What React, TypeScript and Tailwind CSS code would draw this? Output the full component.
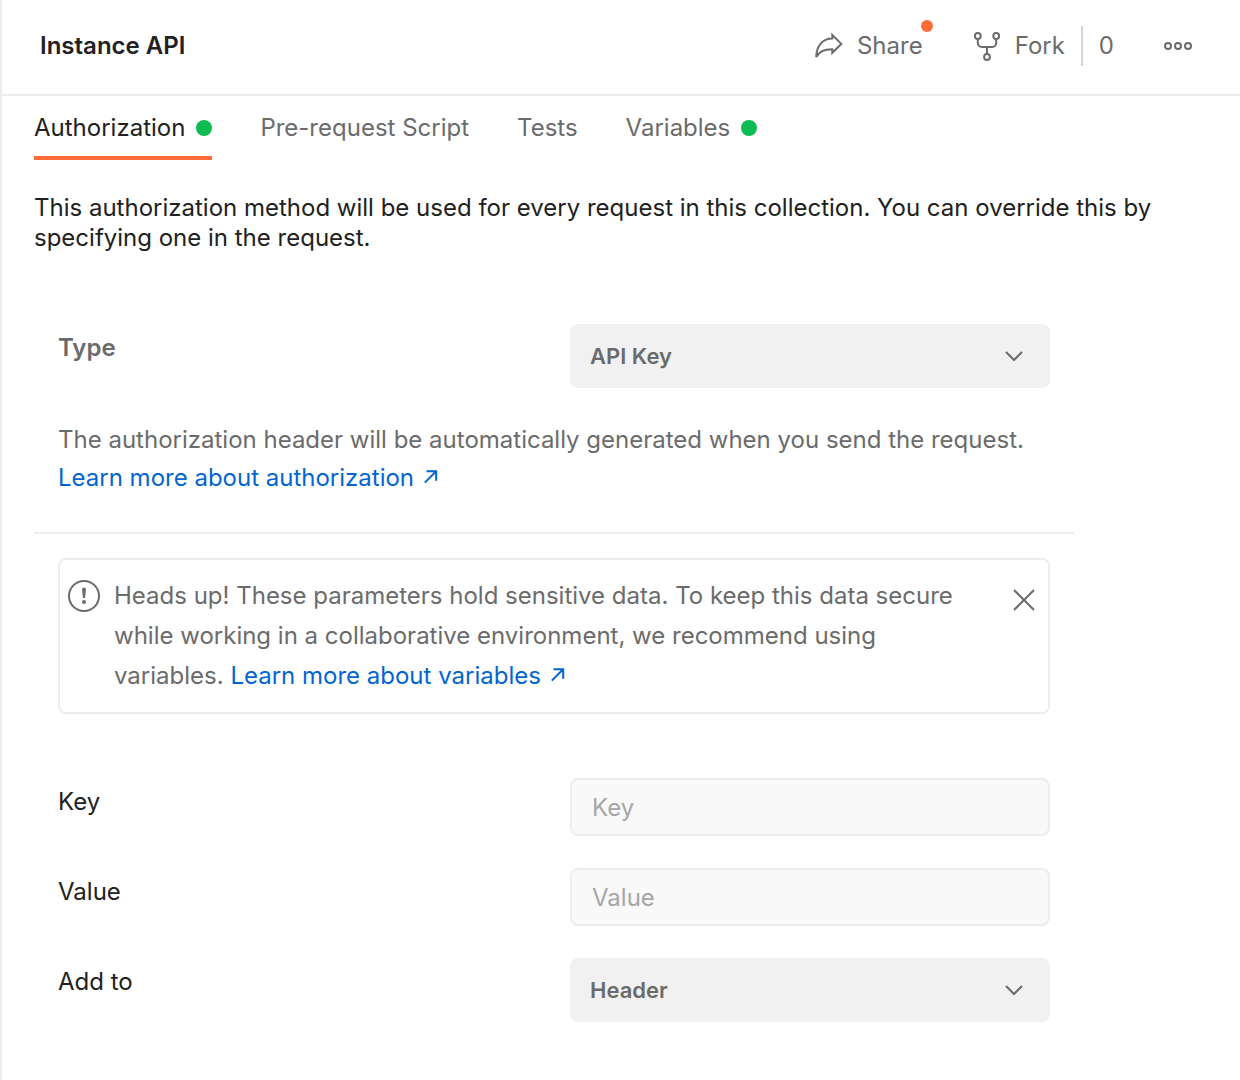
import { useState } from 'react';
import type { ReactNode } from 'react';

function ShareIcon() {
  return (
    <svg width="32" height="32" viewBox="0 0 32 32" fill="none" stroke="currentColor" strokeWidth="2" aria-hidden="true">
      <path d="M19.300 5 28.300 13.900 19.300 22.800V19.300C12 19.200 6.500 21 3.200 27C3.400 16.500 9 8.500 19.300 8.500Z" />
    </svg>
  );
}

function ForkIcon() {
  return (
    <svg width="32" height="32" viewBox="0 0 32 32" fill="none" stroke="currentColor" strokeWidth="2" aria-hidden="true">
      <circle cx="6.800" cy="6" r="2.900" />
      <circle cx="25.200" cy="6" r="2.900" />
      <circle cx="16" cy="27" r="2.900" />
      <path d="M6.800 9v4a4 4 0 0 0 4 4h10.400a4 4 0 0 0 4-4V9M16 17v7" />
    </svg>
  );
}

function MoreIcon() {
  return (
    <svg width="32" height="32" viewBox="0 0 32 32" fill="none" stroke="currentColor" strokeWidth="2" aria-hidden="true">
      <circle cx="6" cy="16" r="3" />
      <circle cx="16" cy="16" r="3" />
      <circle cx="26" cy="16" r="3" />
    </svg>
  );
}

function ExternalArrow() {
  return (
    <svg className="ml-2.5 inline-block align-baseline" width="14" height="16" viewBox="0 0 14 16" fill="none" stroke="currentColor" strokeWidth="2" aria-hidden="true">
      <path d="M2.500 1.200h9.700v9.600M12.200 1.200 .8 12.600" />
    </svg>
  );
}

function AlertIcon() {
  return (
    <svg className="shrink-0" width="32" height="32" viewBox="0 0 32 32" fill="none" aria-hidden="true">
      <circle cx="16" cy="16" r="15" stroke="currentColor" strokeWidth="2" />
      <path d="M14 9.500a2 2 0 0 1 4 0L17 18h-2Z" fill="currentColor" />
      <circle cx="16" cy="22" r="2" fill="currentColor" />
    </svg>
  );
}

function Dot() {
  return <span className="size-4 rounded-full bg-[#0cbb52]" />;
}

function Tab({ label, active, dot, onSelect }: { label: string; active: boolean; dot?: boolean; onSelect: () => void }) {
  return (
    <button
      type="button"
      role="tab"
      aria-selected={active}
      onClick={onSelect}
      className={
        active
          ? 'flex h-16 items-center gap-[11px] border-b-4 border-[#ff6c37] pt-1 text-[#212121]'
          : 'flex h-16 items-center gap-[11px] border-b-4 border-transparent pt-1 text-[#6b6b6b]'
      }
    >
      {label}
      {dot && <Dot />}
    </button>
  );
}

function Field({ id, label, strong, children }: { id: string; label: string; strong?: boolean; children: ReactNode }) {
  return (
    <div className="grid grid-cols-[minmax(0,32fr)_minmax(0,30fr)] items-start">
      <label htmlFor={id} className={strong ? 'py-2 leading-8 font-semibold text-[#6b6b6b]' : 'py-2 leading-8'}>
        {label}
      </label>
      {children}
    </div>
  );
}

function Select({ id, options }: { id: string; options: string[] }) {
  return (
    <div className="relative">
      <select
        id={id}
        className="h-16 w-full appearance-none rounded-lg bg-[#f1f1f1] pr-14 pl-5 text-[22px] font-semibold text-[#6b6b6b]"
      >
        {options.map((option) => (
          <option key={option}>{option}</option>
        ))}
      </select>
      <svg className="pointer-events-none absolute top-6 right-6 text-[#6b6b6b]" width="24" height="16" viewBox="0 0 24 16" fill="none" stroke="currentColor" strokeWidth="2" aria-hidden="true">
        <path d="M4 4l8 8 8-8" />
      </svg>
    </div>
  );
}

function TextBox({ id, placeholder }: { id: string; placeholder: string }) {
  return (
    <input
      id={id}
      type="text"
      placeholder={placeholder}
      className="h-[58px] w-full rounded-lg border-2 border-[#ededed] bg-[#f9f9f9] px-5 placeholder:text-[#a6a6a6]"
    />
  );
}

const tabs = [
  { label: 'Authorization', dot: true },
  { label: 'Pre-request Script' },
  { label: 'Tests' },
  { label: 'Variables', dot: true },
];

export default function App() {
  const [active, setActive] = useState('Authorization');
  const [showNotice, setShowNotice] = useState(true);

  return (
    <div className="min-h-screen border-l-2 border-[#ededed] bg-white font-['Inter',sans-serif] text-[24px] text-[#212121]">
      <header className="flex h-24 items-center justify-between border-b-2 border-[#ededed] pr-[46px] pb-0.5 pl-[38px]">
        <h1 className="font-semibold">Instance API</h1>
        <div className="flex items-center text-[#6b6b6b]">
          <button type="button" className="relative flex items-center gap-3">
            <ShareIcon />
            Share
            <span className="absolute -top-2 -right-2.5 size-3 rounded-full bg-[#ff6c37]" />
          </button>
          <button type="button" className="ml-12 flex items-center gap-3">
            <ForkIcon />
            Fork
          </button>
          <span className="ml-4 flex h-10 items-center border-l-2 border-[#d4d4d4] pl-4">0</span>
          <button type="button" aria-label="More actions" className="ml-12">
            <MoreIcon />
          </button>
        </div>
      </header>

      <main className="px-8">
        <div role="tablist" className="flex gap-12">
          {tabs.map((tab) => (
            <Tab key={tab.label} label={tab.label} dot={tab.dot} active={active === tab.label} onSelect={() => setActive(tab.label)} />
          ))}
        </div>

        <p className="mt-[33px] max-w-[1136px] leading-[30px]">
          This authorization method will be used for every request in this collection. You can override this by
          specifying one in the request.
        </p>

        <div className="mt-[71px] max-w-[1040px]">
          <section className="border-b-2 border-[#ededed] px-6 pb-[35px]">
            <Field id="auth-type" label="Type" strong>
              <Select id="auth-type" options={['API Key', 'Bearer Token', 'Basic Auth', 'No Auth']} />
            </Field>
            <p className="mt-[33px] leading-[38px] text-[#6b6b6b]">
              The authorization header will be automatically generated when you send the request.{' '}
              <a href="#authorization" className="inline-block text-[#0265d2]">
                Learn more about authorization
                <ExternalArrow />
              </a>
            </p>
          </section>

          <section className="px-6 pt-6">
            {showNotice && (
              <div className="mb-16 flex items-start rounded-lg border-2 border-[#ededed] py-4 pr-2 pl-2 text-[#6b6b6b]">
                <span className="mt-1 mr-3.5">
                  <AlertIcon />
                </span>
                <p className="flex-1 pr-10 leading-10">
                  Heads up! These parameters hold sensitive data. To keep this data secure while working in a
                  collaborative environment, we recommend using variables.{' '}
                  <a href="#variables" className="inline-block text-[#0265d2]">
                    Learn more about variables
                    <ExternalArrow />
                  </a>
                </p>
                <button type="button" aria-label="Dismiss" className="mt-2" onClick={() => setShowNotice(false)}>
                  <svg width="32" height="32" viewBox="0 0 32 32" fill="none" stroke="currentColor" strokeWidth="2" aria-hidden="true">
                    <path d="M6 6l20 20M26 6 6 26" />
                  </svg>
                </button>
              </div>
            )}
            <div className="flex flex-col gap-8">
              <Field id="key" label="Key">
                <TextBox id="key" placeholder="Key" />
              </Field>
              <Field id="value" label="Value">
                <TextBox id="value" placeholder="Value" />
              </Field>
              <Field id="add-to" label="Add to">
                <Select id="add-to" options={['Header', 'Query Params']} />
              </Field>
            </div>
          </section>
        </div>
      </main>
    </div>
  );
}
